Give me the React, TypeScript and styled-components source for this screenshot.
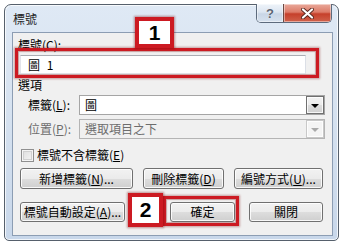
import React from "react";
import styled, { createGlobalStyle } from "styled-components";

const Global = createGlobalStyle`
  html, body { margin: 0; padding: 0; background: #fff; }
  body {
    font-family: "Noto Sans CJK TC", "Liberation Sans", sans-serif;
    font-size: 12px;
    color: #000;
  }
  * { box-sizing: border-box; }
`;

const Window = styled.div`
  position: relative;
  margin: 4px 0 0 4px;
  width: 335px;
  height: 237px;
  border: 1px solid #56606c;
  border-radius: 7px 7px 5px 5px;
  background: linear-gradient(180deg, #dfe9f5 0%, #d6e2f0 45%, #c8d7ea 100%);
  box-shadow: inset 0 0 0 1px rgba(255, 255, 255, 0.75);
  display: flex;
  flex-direction: column;
  padding: 0 5px 4px 7px;
`;

const TitleBar = styled.div`
  height: 27px;
  display: flex;
  align-items: flex-start;
  justify-content: space-between;
`;

const Title = styled.div`
  margin: 7px 0 0 1px;
  line-height: 14px;
  color: #1e1e1e;
`;

const CaptionButtons = styled.div`
  display: flex;
  margin-top: -1px;
  margin-right: 1px;
  border: 1px solid #5d6b7d;
  border-top: none;
  border-radius: 0 0 5px 5px;
  overflow: hidden;
  height: 19px;
`;

const CaptionBtn = styled.div<{ $close?: boolean }>`
  width: ${(p) => (p.$close ? "48px" : "26px")};
  height: 100%;
  display: flex;
  align-items: center;
  justify-content: center;
  border-left: ${(p) => (p.$close ? "1px solid #6b4a44" : "none")};
  background: ${(p) =>
    p.$close
      ? "linear-gradient(180deg, #e9a99b 0%, #dd7c69 45%, #c6402b 55%, #d0624c 100%)"
      : "linear-gradient(180deg, #eef3f9 0%, #dde6f1 45%, #c9d6e6 55%, #d6e1ee 100%)"};
  box-shadow: inset 0 0 0 1px rgba(255, 255, 255, 0.45);
`;

const Client = styled.div`
  position: relative;
  flex: 1;
  border: 1px solid #8c9db3;
  background: #f0f0f0;
  display: flex;
  flex-direction: column;
  padding-top: 5px;
`;

const Label = styled.div<{ $left: number; $top: number; $disabled?: boolean }>`
  margin: ${(p) => `${p.$top}px 0 0 ${p.$left}px`};
  line-height: 14px;
  color: ${(p) => (p.$disabled ? "#6d6d6d" : "#000")};
  white-space: nowrap;
`;

const U = styled.span`
  text-decoration: underline;
`;

const Highlight = styled.div`
  position: relative;
  &::after {
    content: "";
    position: absolute;
    pointer-events: none;
    border: 3px solid #cc1a22;
    box-shadow: 0 0 2px 1px rgba(120, 0, 0, 0.35), inset 0 0 1px 1px rgba(120, 0, 0, 0.35);
    inset: var(--inset);
  }
`;

const TextField = styled.div`
  margin: 3px 0 0 7px;
  width: 286px;
  height: 19px;
  background: #fff;
  border: 1px solid #abadb3;
  border-color: #abadb3 #dbdfe6 #e3e9ef #e2e3ea;
  padding-left: 7px;
  line-height: 17px;
  word-spacing: 4px;
`;

const Row = styled.div<{ $top: number }>`
  display: flex;
  align-items: center;
  margin-top: ${(p) => p.$top}px;
`;

const FieldLabel = styled.div<{ $disabled?: boolean }>`
  width: 51px;
  margin-left: 15px;
  line-height: 14px;
  color: ${(p) => (p.$disabled ? "#6d6d6d" : "#000")};
  white-space: nowrap;
`;

const Select = styled.div<{ $disabled?: boolean }>`
  width: 246px;
  height: 20px;
  display: flex;
  align-items: stretch;
  border: 1px solid ${(p) => (p.$disabled ? "#b4b4b4" : "#a5a5a5")};
  background: ${(p) => (p.$disabled ? "#f0f0f0" : "#fff")};
  color: ${(p) => (p.$disabled ? "#6d6d6d" : "#000")};
`;

const SelectText = styled.div`
  flex: 1;
  padding-left: 5px;
  line-height: 18px;
`;

const DropBtn = styled.div<{ $disabled?: boolean }>`
  width: 18px;
  display: flex;
  align-items: center;
  justify-content: center;
  border: 1px solid ${(p) => (p.$disabled ? "#c8c8c8" : "#707070")};
  background: ${(p) =>
    p.$disabled
      ? "#f4f4f4"
      : "linear-gradient(180deg, #f2f2f2 0%, #ebebeb 50%, #dddddd 51%, #cfcfcf 100%)"};
  box-shadow: inset 0 0 0 1px rgba(255, 255, 255, 0.8);
`;

const Arrow = styled.div<{ $disabled?: boolean }>`
  width: 0;
  height: 0;
  border-left: 4px solid transparent;
  border-right: 4px solid transparent;
  border-top: 4px solid ${(p) => (p.$disabled ? "#a9a9a9" : "#000")};
  margin-top: 1px;
`;

const CheckRow = styled.div`
  display: flex;
  align-items: center;
  margin: 9px 0 0 8px;
  line-height: 14px;
`;

const CheckBox = styled.div`
  width: 13px;
  height: 13px;
  border: 1px solid #8f8f8f;
  background: linear-gradient(135deg, #dcdcdc 0%, #f6f6f6 100%);
  box-shadow: inset 0 0 0 1px #f4f4f4, inset 0 0 0 2px #d0d0d0;
  margin-right: 3px;
`;

const ButtonRow = styled.div<{ $top: number }>`
  display: flex;
  margin: ${(p) => p.$top}px 0 0 7px;
`;

const Button = styled.div<{ $w: number; $h?: number; $ml?: number }>`
  width: ${(p) => p.$w}px;
  height: ${(p) => p.$h ?? 20}px;
  margin-left: ${(p) => p.$ml ?? 0}px;
  border: 1px solid #707070;
  border-radius: 3px;
  background: linear-gradient(180deg, #f2f2f2 0%, #ebebeb 50%, #dddddd 51%, #cfcfcf 100%);
  box-shadow: inset 0 0 0 1px rgba(255, 255, 255, 0.85);
  display: flex;
  align-items: center;
  justify-content: center;
  line-height: 14px;
  white-space: nowrap;
`;

const Callout = styled.div<{ $l: number; $t: number; $w: number; $h: number }>`
  position: absolute;
  left: ${(p) => p.$l}px;
  top: ${(p) => p.$t}px;
  width: ${(p) => p.$w}px;
  height: ${(p) => p.$h}px;
  background: #fff;
  border: 4px solid #cc1a22;
  box-shadow: 0 0 2px 1px rgba(120, 0, 0, 0.4);
  display: flex;
  align-items: center;
  justify-content: center;
  font-family: "Liberation Sans", Arial, sans-serif;
  font-weight: bold;
  font-size: 21px;
  color: #000;
  z-index: 5;
`;

const QuestionGlyph = styled.span`
  font-family: "Liberation Sans", sans-serif;
  font-size: 13px;
  font-weight: bold;
  color: #5b6572;
  text-shadow: 0 0 1px #fff;
`;

export default function App() {
  return (
    <>
      <Global />
      <Window>
        <TitleBar>
          <Title>標號</Title>
          <CaptionButtons>
            <CaptionBtn>
              <QuestionGlyph>?</QuestionGlyph>
            </CaptionBtn>
            <CaptionBtn $close>
              <svg width="13" height="11" viewBox="0 0 13 11">
                <path
                  d="M2 1.5 L11 9.5 M11 1.5 L2 9.5"
                  stroke="#5a2a22"
                  strokeWidth="4"
                  strokeLinecap="round"
                />
                <path
                  d="M2 1.5 L11 9.5 M11 1.5 L2 9.5"
                  stroke="#ffffff"
                  strokeWidth="2.2"
                  strokeLinecap="round"
                />
              </svg>
            </CaptionBtn>
          </CaptionButtons>
        </TitleBar>
        <Client>
          <Label $left={5} $top={0}>
            標號(C):
          </Label>
          <Highlight style={{ ["--inset" as string]: "-4px 13px -4px 2px" } as React.CSSProperties}>
            <TextField>圖 1</TextField>
          </Highlight>
          <Label $left={5} $top={4}>
            選項
          </Label>
          <Row $top={3}>
            <FieldLabel>
              標籤(<U>L</U>):
            </FieldLabel>
            <Select>
              <SelectText>圖</SelectText>
              <DropBtn>
                <Arrow />
              </DropBtn>
            </Select>
          </Row>
          <Row $top={4}>
            <FieldLabel $disabled>
              位置(<U>P</U>):
            </FieldLabel>
            <Select $disabled>
              <SelectText>選取項目之下</SelectText>
              <DropBtn $disabled>
                <Arrow $disabled />
              </DropBtn>
            </Select>
          </Row>
          <CheckRow>
            <CheckBox />
            <span>
              標號不含標籤(<U>E</U>)
            </span>
          </CheckRow>
          <ButtonRow $top={6}>
            <Button $w={113} $h={21}>
              新增標籤(<U>N</U>)...
            </Button>
            <Button $w={81} $h={21} $ml={10}>
              刪除標籤(<U>D</U>)
            </Button>
            <Button $w={89} $h={21} $ml={10}>
              編號方式(<U>U</U>)...
            </Button>
          </ButtonRow>
          <ButtonRow $top={13}>
            <Button $w={105}>
              標號自動設定(<U>A</U>)...
            </Button>
            <Highlight
              style={{ ["--inset" as string]: "-6px -4px -4px -7px", marginLeft: 45 } as React.CSSProperties}
            >
              <Button $w={65}>確定</Button>
            </Highlight>
            <Button $w={74} $ml={14}>
              關閉
            </Button>
          </ButtonRow>
        </Client>
        <Callout $l={130} $t={12} $w={39} $h={31}>
          1
        </Callout>
        <Callout $l={123} $t={188} $w={35} $h={34}>
          2
        </Callout>
      </Window>
    </>
  );
}
